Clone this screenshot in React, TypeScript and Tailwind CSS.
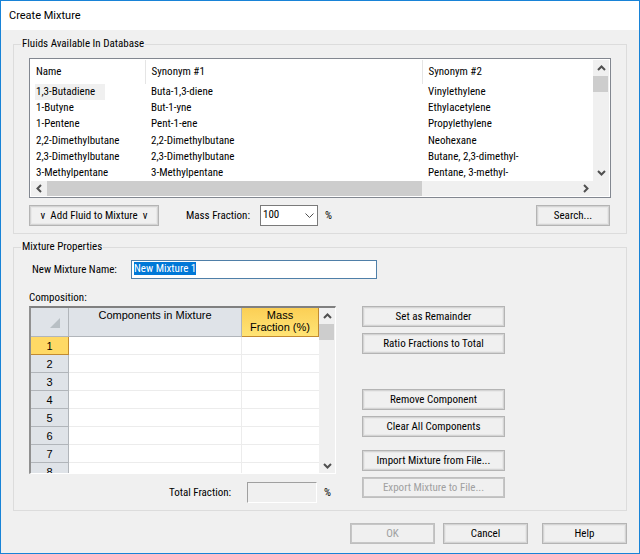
import { useEffect, useRef } from "react";
import type { ButtonHTMLAttributes, ReactNode } from "react";

const fluids = [
  { name: "1,3-Butadiene", synonym1: "Buta-1,3-diene", synonym2: "Vinylethylene" },
  { name: "1-Butyne", synonym1: "But-1-yne", synonym2: "Ethylacetylene" },
  { name: "1-Pentene", synonym1: "Pent-1-ene", synonym2: "Propylethylene" },
  { name: "2,2-Dimethylbutane", synonym1: "2,2-Dimethylbutane", synonym2: "Neohexane" },
  { name: "2,3-Dimethylbutane", synonym1: "2,3-Dimethylbutane", synonym2: "Butane, 2,3-dimethyl-" },
  { name: "3-Methylpentane", synonym1: "3-Methylpentane", synonym2: "Pentane, 3-methyl-" },
];

const gridRows = [1, 2, 3, 4, 5, 6, 7, 8];

const chevrons = {
  up: "M1 6 L4.5 2.5 L8 6",
  down: "M1 3 L4.5 6.5 L8 3",
  left: "M6 1 L2.5 4.5 L6 8",
  right: "M3 1 L6.5 4.5 L3 8",
};

function ScrollArrow({ direction }: { direction: keyof typeof chevrons }) {
  return (
    <button
      type="button"
      aria-label={`Scroll ${direction}`}
      className="flex size-4 shrink-0 items-center justify-center"
    >
      <svg viewBox="0 0 9 9" className="size-[9px]" fill="none" stroke="#505050" strokeWidth="2">
        <path d={chevrons[direction]} />
      </svg>
    </button>
  );
}

function VerticalScrollbar() {
  return (
    <div className="flex w-4 shrink-0 flex-col bg-[#f0f0f0]">
      <ScrollArrow direction="up" />
      <div className="mr-px h-4 bg-[#cdcdcd]" />
      <div className="flex-1" />
      <ScrollArrow direction="down" />
    </div>
  );
}

function Button({ className = "", ...props }: ButtonHTMLAttributes<HTMLButtonElement>) {
  return (
    <button
      type="button"
      className={`h-[21px] border border-[#b4b4b4] bg-[#f0f0f0] text-center leading-4 whitespace-pre shadow-[inset_0_0_0_1px_#d4d4d4,inset_0_0_0_2px_#e8e8e8] disabled:border-[#bfbfbf] disabled:text-[#a0a0a0] disabled:shadow-[inset_0_0_0_1px_#c6c6c6] ${className}`}
      {...props}
    />
  );
}

function Group({ title, className = "", children }: { title: string; className?: string; children: ReactNode }) {
  return (
    <fieldset className={`min-w-0 border border-[#dcdcdc] px-[15px] pb-[7px] ${className}`}>
      <legend className="-ml-2 px-px leading-4">{title}</legend>
      {children}
    </fieldset>
  );
}

function FluidDatabase() {
  return (
    <Group title="Fluids Available In Database">
      <div className="mt-1.5 flex border border-[#828790] bg-white p-px">
        <div className="flex min-w-0 flex-1 flex-col">
          <table className="h-[121px] w-full table-fixed text-left">
            <colgroup>
              <col className="w-[114px]" />
              <col className="w-[277px]" />
              <col />
            </colgroup>
            <thead>
              <tr className="h-6">
                <th className="border-r border-[#e5e5e5] px-[5px] font-normal">Name</th>
                <th className="border-r border-[#e5e5e5] px-1.5 font-normal">Synonym #1</th>
                <th className="px-1.5 font-normal">Synonym #2</th>
              </tr>
            </thead>
            <tbody>
              {fluids.map((fluid, index) => (
                <tr key={fluid.name} className="h-4 leading-4">
                  <td className="pl-1">
                    <span className={`block w-[70px] px-px whitespace-nowrap ${index === 0 ? "bg-[#f0f0f0]" : ""}`}>
                      {fluid.name}
                    </span>
                  </td>
                  <td className="px-1.5">{fluid.synonym1}</td>
                  <td className="px-1.5">{fluid.synonym2}</td>
                </tr>
              ))}
            </tbody>
          </table>
          <div className="flex h-[15px] items-center bg-[#f0f0f0]">
            <ScrollArrow direction="left" />
            <div className="h-full w-2/3 bg-[#cdcdcd]" />
            <div className="flex-1" />
            <ScrollArrow direction="right" />
          </div>
        </div>
        <div className="flex bg-[#f0f0f0] pb-4">
          <VerticalScrollbar />
        </div>
      </div>

      <div className="mt-[7px] flex items-center">
        <Button className="w-[130px]">{"v  Add Fluid to Mixture  v"}</Button>
        <label htmlFor="mass-fraction" className="ml-[27px] w-[74px]">
          Mass Fraction:
        </label>
        <div className="relative">
          <select
            id="mass-fraction"
            defaultValue="100"
            className="block h-[21px] w-[58px] appearance-none border border-[#7a7a7a] bg-white px-0.5 pb-px"
          >
            <option>100</option>
            <option>50</option>
            <option>25</option>
          </select>
          <svg
            viewBox="0 0 9 9"
            className="pointer-events-none absolute top-1.5 right-1 size-[9px]"
            fill="none"
            stroke="#505050"
          >
            <path d="M0.5 2.5 L4.5 6.5 L8.5 2.5" />
          </svg>
        </div>
        <span className="ml-[7px]">%</span>
        <Button className="mr-px ml-auto w-[74px]">Search...</Button>
      </div>
    </Group>
  );
}

function CompositionGrid() {
  return (
    <div className="flex h-[168px] w-[307px] border border-t-2 border-l-2 border-t-[#808080] border-r-white border-b-white border-l-[#909090] bg-white">
      <div className="h-full min-w-0 flex-1 overflow-hidden">
        <table className="w-full table-fixed border-separate border-spacing-0 font-['Liberation_Sans',Arial,sans-serif] text-[11px] leading-3">
          <colgroup>
            <col className="w-[38px]" />
            <col />
            <col className="w-[77px]" />
          </colgroup>
          <thead>
            <tr className="h-[29px]">
              <th className="border-r border-b border-[#b1b5ba] bg-[#dfe3e8] p-0 align-bottom">
                <svg viewBox="0 0 10 10" className="mr-2 mb-2 ml-auto size-2.5" fill="#b8bfc4">
                  <path d="M10 0 V10 H0 Z" />
                </svg>
              </th>
              <th className="border-r border-b border-[#b1b5ba] bg-[#dfe3e8] p-0 pt-px align-top font-normal">
                Components in Mixture
              </th>
              <th className="border-r border-b border-[#c28a30] bg-linear-to-b from-[#fbcf55] to-[#ffe475] p-0 pt-px align-top font-normal">
                Mass
                <br />
                Fraction (%)
              </th>
            </tr>
          </thead>
          <tbody>
            {gridRows.map((row) => (
              <tr key={row} className="h-[18px]">
                <th
                  className={`border-r border-b p-0 font-normal ${
                    row === 1 ? "border-[#c28a30] bg-[#ffd965]" : "border-[#b1b5ba] bg-[#dfe3e8]"
                  }`}
                >
                  {row}
                </th>
                <td className="border-r border-b border-[#ececec] p-0" />
                <td className="border-b border-[#ececec] p-0" />
              </tr>
            ))}
          </tbody>
        </table>
      </div>
      <VerticalScrollbar />
    </div>
  );
}

function MixtureProperties() {
  const nameRef = useRef<HTMLInputElement>(null);

  useEffect(() => {
    nameRef.current?.focus();
    nameRef.current?.select();
  }, []);

  return (
    <Group title="Mixture Properties" className="mt-[5px]">
      <div className="mt-[5px] flex items-center">
        <label htmlFor="mixture-name" className="ml-[3px] w-[99px]">
          New Mixture Name:
        </label>
        <input
          id="mixture-name"
          ref={nameRef}
          defaultValue="New Mixture 1"
          className="h-[19px] w-[246px] border border-[#4f7fa8] bg-white px-0.5 pb-0.5 leading-3 outline-none selection:bg-[#0078d7] selection:text-white"
        />
      </div>

      <div className="mt-[11px] leading-4">Composition:</div>
      <div className="flex">
        <div>
          <CompositionGrid />
          <div className="mt-2 flex items-center">
            <label htmlFor="total-fraction" className="ml-[140px] w-[78px]">
              Total Fraction:
            </label>
            <input
              id="total-fraction"
              readOnly
              className="h-[21px] w-[70px] border border-t-[#a0a0a0] border-r-white border-b-white border-l-[#a0a0a0] bg-[#f0f0f0] outline-none"
            />
            <span className="ml-[7px]">%</span>
          </div>
        </div>
        <div className="ml-[26px] flex w-[143px] flex-col">
          <Button>Set as Remainder</Button>
          <Button className="mt-1.5">Ratio Fractions to Total</Button>
          <Button className="mt-[35px]">Remove Component</Button>
          <Button className="mt-1.5">Clear All Components</Button>
          <Button className="mt-[13px]">Import Mixture from File...</Button>
          <Button className="mt-1.5" disabled>
            Export Mixture to File...
          </Button>
        </div>
      </div>
    </Group>
  );
}

export default function App() {
  return (
    <div className="flex min-h-screen flex-col border border-[#1883d7] bg-[#f0f0f0] font-['Roboto_Condensed','Liberation_Sans',Arial,sans-serif] text-[11px] leading-4 text-black">
      <header className="flex h-[29px] items-center bg-white px-2">
        <h1 className="font-[Roboto,'Segoe_UI',sans-serif] text-[11px]">Create Mixture</h1>
      </header>
      <main className="px-3 pt-1.5">
        <FluidDatabase />
        <MixtureProperties />
        <div className="mt-3 flex justify-end pb-2">
          <Button className="w-[85px]" disabled>
            OK
          </Button>
          <Button className="ml-2 w-[85px]">Cancel</Button>
          <Button className="ml-3.5 w-[85px]">Help</Button>
        </div>
      </main>
    </div>
  );
}
